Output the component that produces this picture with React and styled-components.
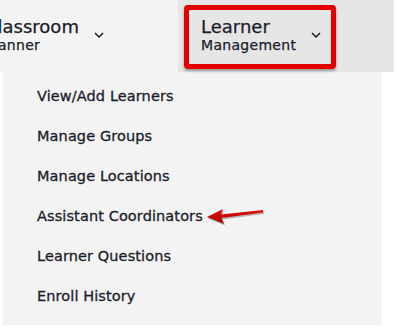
import styled, { createGlobalStyle } from 'styled-components'

const Global = createGlobalStyle`
  html, body {
    margin: 0;
    padding: 0;
    background: #ffffff;
  }
  body {
    font-family: "DejaVu Sans", "Liberation Sans", sans-serif;
    color: #1c1c2a;
    overflow: hidden;
  }
`

const Page = styled.div`
  width: 398px;
  height: 332px;
  overflow: hidden;
`

const NavBar = styled.div`
  display: flex;
  height: 72px;
  margin-left: -38px;
`

const NavItem = styled.div`
  position: relative;
  display: flex;
  align-items: center;
  width: 216px;
  box-sizing: border-box;
  padding-left: 23px;
  background: ${({ active }) => (active ? '#e6e6e6' : '#f3f3f3')};
`

const NavLabel = styled.div`
  display: flex;
  flex-direction: column;
  line-height: 1.1;
  margin-top: -1px;
  -webkit-text-stroke: 0.25px #1c1c2a;
`

const NavTitle = styled.span`
  font-size: 18px;
`

const NavSub = styled.span`
  font-size: 14px;
  letter-spacing: 0.3px;
  margin-top: 1px;
`

const Chevron = styled.svg`
  margin-left: 15px;
  margin-top: -2px;
  flex: none;
`

// red annotation box drawn on top of the active tab
const Highlight = styled.div`
  position: absolute;
  left: 6px;
  top: 5px;
  width: 152px;
  height: 64px;
  box-sizing: border-box;
  border: 5px solid #e50000;
  border-radius: 4px;
  box-shadow: 0 2px 3px rgba(0, 0, 0, 0.35);
`

const Menu = styled.ul`
  list-style: none;
  margin: 0 0 0 3px;
  padding: 4px 0 9px 34px;
  width: 379px;
  box-sizing: border-box;
  background: #f3f3f3;
`

const MenuItem = styled.li`
  position: relative;
  height: 40px;
  line-height: 40px;
  font-size: 14.5px;
  letter-spacing: 0.1px;
  color: #1c1c2a;
  -webkit-text-stroke: 0.3px #1c1c2a;
`

const Arrow = styled.svg`
  position: absolute;
  left: 168px;
  top: 9px;
`

const items = [
  'View/Add Learners',
  'Manage Groups',
  'Manage Locations',
  'Assistant Coordinators',
  'Learner Questions',
  'Enroll History',
]

function Caret() {
  return (
    <Chevron width="10" height="6" viewBox="0 0 10 6">
      <path d="M1 1 L5 5 L9 1" fill="none" stroke="#1c1c2a" strokeWidth="1.5" />
    </Chevron>
  )
}

function App() {
  return (
    <Page>
      <Global />
      <NavBar>
        <NavItem>
          <NavLabel>
            <NavTitle>Classroom</NavTitle>
            <NavSub>Planner</NavSub>
          </NavLabel>
          <Caret />
        </NavItem>
        <NavItem active>
          <NavLabel>
            <NavTitle>Learner</NavTitle>
            <NavSub>Management</NavSub>
          </NavLabel>
          <Caret />
          <Highlight />
        </NavItem>
      </NavBar>
      <Menu>
        {items.map((label) => (
          <MenuItem key={label}>
            {label}
            {label === 'Assistant Coordinators' && (
              <Arrow width="62" height="22" viewBox="0 0 62 22">
                <defs>
                  <linearGradient id="arr" x1="0" y1="0" x2="0" y2="1">
                    <stop offset="0" stopColor="#e81010" />
                    <stop offset="1" stopColor="#a80000" />
                  </linearGradient>
                </defs>
                <path
                  d="M2 12 L18 4 L16 9.5 L58 5 L58 7.5 L16.5 13 L19 19 Z"
                  fill="rgba(0,0,0,0.25)"
                  transform="translate(1 1.5)"
                />
                <path d="M2 12 L18 4 L16 9.5 L58 5 L58 7.5 L16.5 13 L19 19 Z" fill="url(#arr)" />
              </Arrow>
            )}
          </MenuItem>
        ))}
      </Menu>
    </Page>
  )
}

export default App
